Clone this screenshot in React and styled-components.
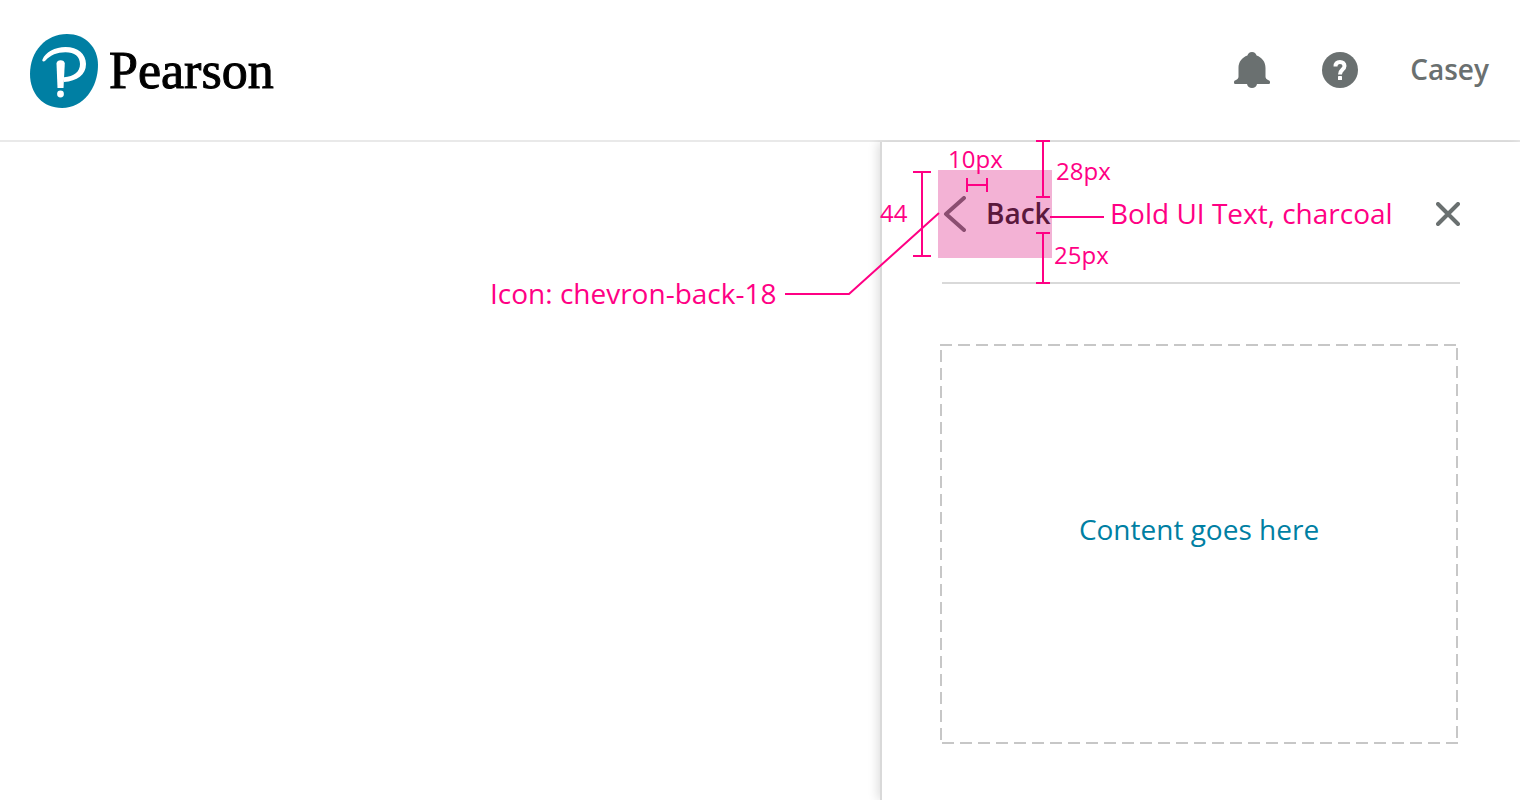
import React from 'react';
import styled, { createGlobalStyle } from 'styled-components';

const PINK = '#ff0084';
const GREY = '#6a7070';
const TEAL = '#007fa3';

const GlobalStyle = createGlobalStyle`
  * { box-sizing: border-box; }
  body {
    margin: 0;
    background: #fff;
    font-family: 'Open Sans', sans-serif;
    font-size: 28px;
    line-height: 38px;
    overflow-x: hidden;
  }
`;

const Page = styled.div`
  display: flex;
  flex-direction: column;
  min-height: 100vh;
`;

const Header = styled.header`
  display: flex;
  align-items: center;
  justify-content: space-between;
  height: 142px;
  padding: 0 31px 0 30px;
  border-bottom: 2px solid #e9e9e9;
`;

const Brand = styled.a`
  display: flex;
  align-items: center;
  gap: 11px;
  padding-top: 2px;
  color: #000;
  text-decoration: none;
`;

const Wordmark = styled.span`
  font-family: 'Liberation Serif', serif;
  font-size: 52px;
  line-height: 60px;
  -webkit-text-stroke: 1px #000;
`;

const Actions = styled.nav`
  display: flex;
  align-items: center;
  gap: 52px;
`;

const PlainButton = styled.button`
  display: flex;
  align-items: center;
  padding: 0;
  border: 0;
  background: none;
  color: ${GREY};
  font: inherit;
  cursor: pointer;
`;

const Label = styled.span`
  padding-bottom: 2px;
  color: ${(p) => (p.$dark ? '#252525' : GREY)};
  font-weight: 600;
`;

const Body = styled.div`
  display: flex;
  flex: 1;
`;

const Main = styled.main`
  flex: 1;
`;

const Drawer = styled.aside`
  position: relative;
  width: 640px;
  background: #fff;
  border-left: 2px solid #d9d9d9;
  box-shadow: -2px 0 10px rgba(0, 0, 0, 0.14);
  clip-path: inset(-2px 0 0 -400px);
`;

const DrawerHead = styled.div`
  display: flex;
  align-items: center;
  justify-content: space-between;
  height: 142px;
  margin: 0 60px;
  padding-top: 4px;
  border-bottom: 2px solid #d9d9d9;
`;

const BackButton = styled(PlainButton)`
  position: relative;
  gap: 20px;
  height: 88px;
  margin-left: -4px;
  padding: 0 1px 0 4px;
`;

const TapArea = styled.span`
  position: absolute;
  inset: 0;
  background: rgba(215, 0, 115, 0.3);
`;

const DrawerBody = styled.div`
  padding: 60px 62px 56px 58px;
`;

const Placeholder = styled.div`
  --across: repeating-linear-gradient(90deg, #c7c7c7 0 12px, transparent 12px 18px);
  --down: repeating-linear-gradient(180deg, #c7c7c7 0 12px, transparent 12px 18px);
  display: flex;
  align-items: center;
  justify-content: center;
  height: 400px;
  padding-bottom: 30px;
  color: ${TEAL};
  background:
    var(--across) 0 0 / 100% 2px no-repeat,
    var(--across) 2px 100% / 100% 2px no-repeat,
    var(--down) 0 6px / 2px 392px no-repeat,
    var(--down) 100% 4px / 2px 392px no-repeat;
`;

const Guides = styled.svg`
  position: absolute;
  left: -102px;
  top: -2px;
  pointer-events: none;
`;

const Note = styled.span`
  position: absolute;
  left: ${(p) => p.$x}px;
  top: ${(p) => p.$y}px;
  color: ${PINK};
  font-size: ${(p) => (p.$small ? 24 : 28)}px;
  line-height: ${(p) => (p.$small ? 32 : 38)}px;
  white-space: nowrap;
  pointer-events: none;
`;

const LogoMark = () => (
  <svg width="68" height="74" viewBox="0 0 68 74" aria-hidden="true">
    <path
      d="M37 0C55 0 68 13 68 31C68 54 53 74 32 74C13 74 0 60 0 40C0 17 16 0 37 0Z"
      fill={TEAL}
    />
    <path
      d="M12.500 25.500C15.500 18 25 13 35.500 13C48 13 56 20 56 30C56 41 47 47 34 48V43.300C44 42.500 50 38 50 30C50 22.500 44.500 18.200 35.500 18.200C27 18.200 20.500 21 15.500 26.500C13.800 28.200 11.700 27.500 12.500 25.500Z"
      fill="#fff"
    />
    <path d="M26.500 29.500C26.500 25 34.800 25 34.800 29.500L33.500 54H27.500Z" fill="#fff" />
    <circle cx="30.500" cy="60" r="3.400" fill="#fff" />
  </svg>
);

const BellIcon = () => (
  <svg width="36" height="36" viewBox="0 0 36 36" fill="currentColor" aria-hidden="true">
    <path d="M18 0C20.500 0 22 1.500 22.600 3.600C28 5.500 31.500 10 31.500 16V24.500C31.500 26.500 32.500 27.500 34.500 28.200C35.500 28.600 36 29.200 36 30.200V30.800Q36 32 34.800 32H23C22.500 34.500 20.600 36 18 36C15.400 36 13.500 34.500 13 32H1.200Q0 32 0 30.800V30.200C0 29.200 .5 28.600 1.500 28.200C3.500 27.500 4.500 26.500 4.500 24.500V16C4.500 10 8 5.500 13.400 3.600C14 1.500 15.500 0 18 0Z" />
  </svg>
);

const HelpIcon = () => (
  <svg width="36" height="36" viewBox="0 0 36 36" aria-hidden="true">
    <circle cx="18" cy="18" r="18" fill="currentColor" />
    <path
      d="M13.500 14.500C13.500 11.600 15.200 10 18 10C20.700 10 22.500 11.500 22.500 13.900C22.500 17.500 18 17.600 18 22.400"
      fill="none"
      stroke="#fff"
      strokeWidth="4"
    />
    <rect x="16" y="24" width="4" height="4" rx=".6" fill="#fff" />
  </svg>
);

const ChevronBackIcon = () => (
  <svg width="24" height="36" viewBox="0 0 24 36" aria-hidden="true">
    <path
      d="M22 2L4 18L22 34"
      fill="none"
      stroke="currentColor"
      strokeWidth="4"
      strokeLinecap="round"
      strokeLinejoin="round"
    />
  </svg>
);

const CloseIcon = () => (
  <svg width="24" height="24" viewBox="0 0 24 24" aria-hidden="true">
    <path d="M2 2L22 22M22 2L2 22" stroke="currentColor" strokeWidth="4" strokeLinecap="round" />
  </svg>
);

const GuideLines = () => (
  <Guides
    width="340"
    height="160"
    viewBox="-102 -2 340 160"
    fill="none"
    stroke={PINK}
    strokeWidth="2"
    aria-hidden="true"
  >
    <path d="M31 30H49M40 30V114M31 114H49" />
    <path d="M85 36V50M85 43H105M105 36V50" />
    <path d="M154 -1H168M161 -1V55M154 55H168" />
    <path d="M154 91H168M161 91V141M154 141H168" />
    <path d="M168 75H222" />
    <path d="M-97 152H-33L57 71" />
  </Guides>
);

const notes = [
  { text: '10px', x: 66, y: 1, small: true },
  { text: '28px', x: 174, y: 13, small: true },
  { text: '44', x: -2, y: 55, small: true },
  { text: '25px', x: 172, y: 97, small: true },
  { text: 'Bold UI Text, charcoal', x: 228, y: 52 },
  { text: 'Icon: chevron-back-18', x: -392, y: 132 },
];

export default function App() {
  return (
    <Page>
      <GlobalStyle />
      <Header>
        <Brand href="#">
          <LogoMark />
          <Wordmark>Pearson</Wordmark>
        </Brand>
        <Actions>
          <PlainButton aria-label="Notifications">
            <BellIcon />
          </PlainButton>
          <PlainButton aria-label="Help">
            <HelpIcon />
          </PlainButton>
          <PlainButton>
            <Label>Casey</Label>
          </PlainButton>
        </Actions>
      </Header>
      <Body>
        <Main />
        <Drawer>
          <DrawerHead>
            <BackButton>
              <ChevronBackIcon />
              <Label $dark>Back</Label>
              <TapArea />
            </BackButton>
            <PlainButton aria-label="Close">
              <CloseIcon />
            </PlainButton>
          </DrawerHead>
          <DrawerBody>
            <Placeholder>Content goes here</Placeholder>
          </DrawerBody>
          <GuideLines />
          {notes.map((n) => (
            <Note key={n.text} $x={n.x} $y={n.y} $small={n.small}>
              {n.text}
            </Note>
          ))}
        </Drawer>
      </Body>
    </Page>
  );
}
